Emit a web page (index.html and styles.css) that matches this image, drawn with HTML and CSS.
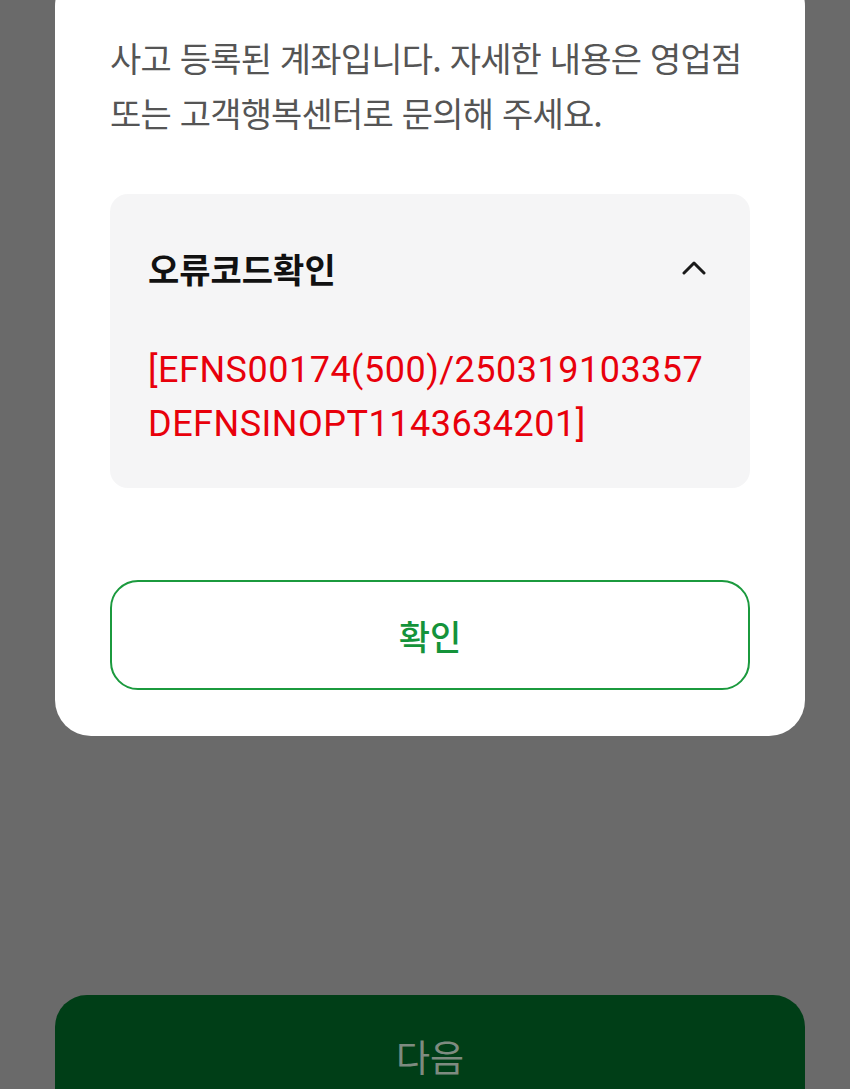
FILE: index.html
```html
<!DOCTYPE html>
<html lang="ko">
<head>
<meta charset="utf-8">
<title>오류</title>
<link rel="stylesheet" href="styles.css">
</head>
<body>
<div class="page">
  <div class="card">
    <p class="message">사고 등록된 계좌입니다. 자세한 내용은 영업점<br>또는 고객행복센터로 문의해 주세요.</p>
    <div class="errbox">
      <div class="errhead">
        <span class="errtitle">오류코드확인</span>
        <svg class="chev" width="24" height="15" viewBox="0 0 24 15"><path d="M2 13 L12 3 L22 13" fill="none" stroke="#1a1a1a" stroke-width="3" stroke-linecap="round" stroke-linejoin="round"/></svg>
      </div>
      <div class="errcode">[EFNS00174(500)/250319103357<br>DEFNSINOPT1143634201]</div>
    </div>
    <button class="confirm">확인</button>
  </div>
  <div class="next">다음</div>
</div>
</body>
</html>
```

FILE: styles.css
```css
html, body {
  margin: 0;
  padding: 0;
  background: #6a6a6a;
}
body {
  height: 1089px;
  overflow: hidden;
  font-family: "Noto Sans CJK KR", "Noto Sans", sans-serif;
}
.page {
  padding: 0 45px 0 55px;
  display: flex;
  flex-direction: column;
}
.card {
  margin-top: -30px;
  width: 750px;
  box-sizing: border-box;
  background: #ffffff;
  border-radius: 36px;
  padding: 60px 55px 46px 55px;
  display: flex;
  flex-direction: column;
}
.message {
  margin: 0;
  font-size: 34px;
  line-height: 55px;
  letter-spacing: -0.8px;
  color: #555555;
  white-space: nowrap;
}
.errbox {
  margin-top: 54px;
  background: #f5f5f6;
  border-radius: 18px;
  padding: 50px 44px 37px 38px;
}
.errhead {
  display: flex;
  align-items: center;
  justify-content: space-between;
  height: 48px;
}
.errtitle {
  font-size: 34px;
  font-weight: 700;
  letter-spacing: 0;
  color: #111111;
}
.chev {
  display: block;
  margin-top: -2px;
}
.errcode {
  margin-top: 51px;
  font-family: Roboto, "Liberation Sans", sans-serif;
  font-size: 36px;
  line-height: 54px;
  letter-spacing: 0.5px;
  color: #e8000b;
  white-space: nowrap;
}
.confirm {
  margin-top: 92px;
  height: 110px;
  width: 100%;
  box-sizing: border-box;
  background: #ffffff;
  border: 2px solid #1b9a3e;
  border-radius: 28px;
  font-family: "Noto Sans CJK KR", sans-serif;
  font-size: 34px;
  font-weight: 500;
  color: #14933a;
  padding: 0;
}
.next {
  margin-top: 259px;
  width: 750px;
  height: 140px;
  background: #003e17;
  border-radius: 32px;
  display: flex;
  justify-content: center;
  padding-top: 36px;
  box-sizing: border-box;
  font-size: 37px;
  line-height: 50px;
  color: #7e8b80;
}
```
